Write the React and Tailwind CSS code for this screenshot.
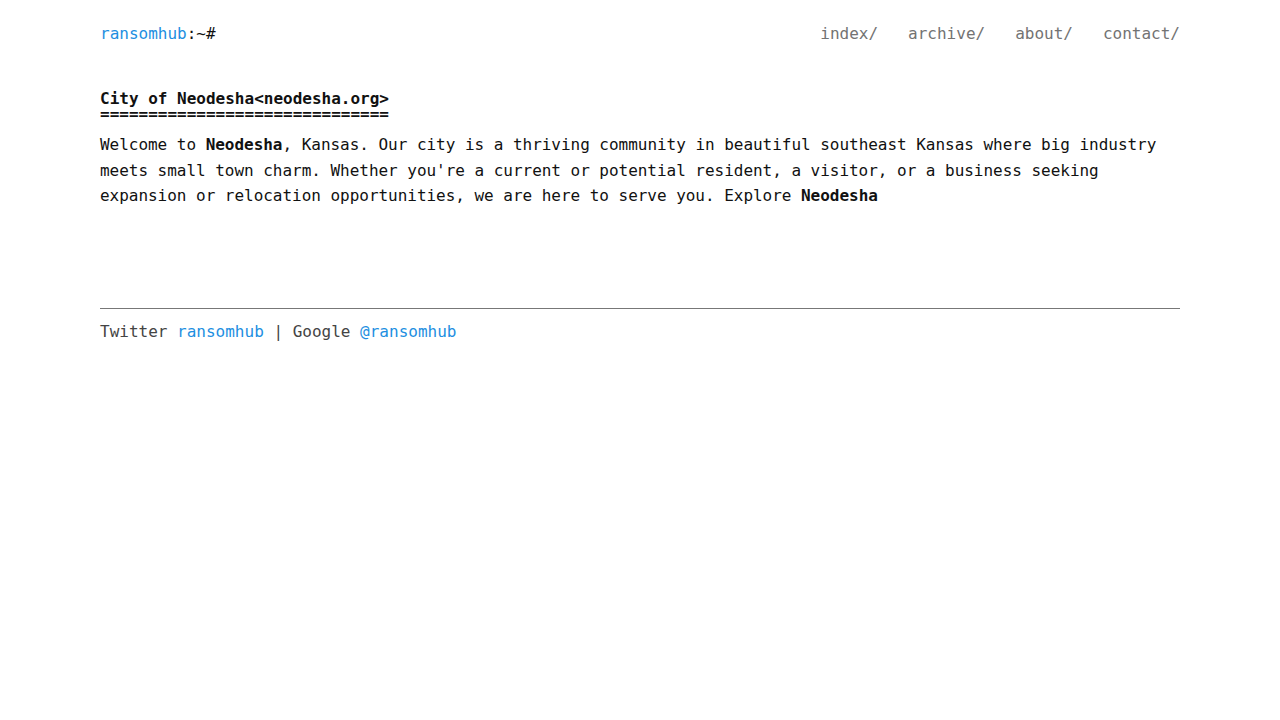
export default function App() {
  return (
    <div className="min-h-screen bg-white text-[#111] text-[16px]" style={{ fontFamily: '"DejaVu Sans Mono", "Liberation Mono", monospace' }}>
      <div className="mx-[100px]">
        <header className="flex items-center justify-between h-[66px] pt-[1px]">
          <div className="leading-[24px]">
            <a className="text-[#1e8fe1]">ransomhub</a>
            <span className="text-[#111]">:~#</span>
          </div>
          <nav className="flex gap-[30px] text-[#737373] leading-[24px]">
            <a>index/</a>
            <a>archive/</a>
            <a>about/</a>
            <a>contact/</a>
          </nav>
        </header>
        <main className="pt-[25px] min-h-[242px]">
          <h1 className="font-bold text-[16px] leading-[15px]">
            <div>City of Neodesha&lt;neodesha.org&gt;</div>
            <div>==============================</div>
          </h1>
          <p className="mt-[11px] leading-[25.6px] tracking-[-0.03px]">
            Welcome to <b>Neodesha</b>, Kansas. Our city is a thriving community in beautiful southeast Kansas where big industry meets small town charm. Whether you're a current or potential resident, a visitor, or a business seeking expansion or relocation opportunities, we are here to serve you. Explore <b>Neodesha</b>
          </p>
        </main>
        <footer className="border-t border-[#777] pt-[11px] text-[#444] leading-[24px]">
          Twitter <a className="text-[#1e8fe1]">ransomhub</a> | Google <a className="text-[#1e8fe1]">@ransomhub</a>
        </footer>
      </div>
    </div>
  );
}
